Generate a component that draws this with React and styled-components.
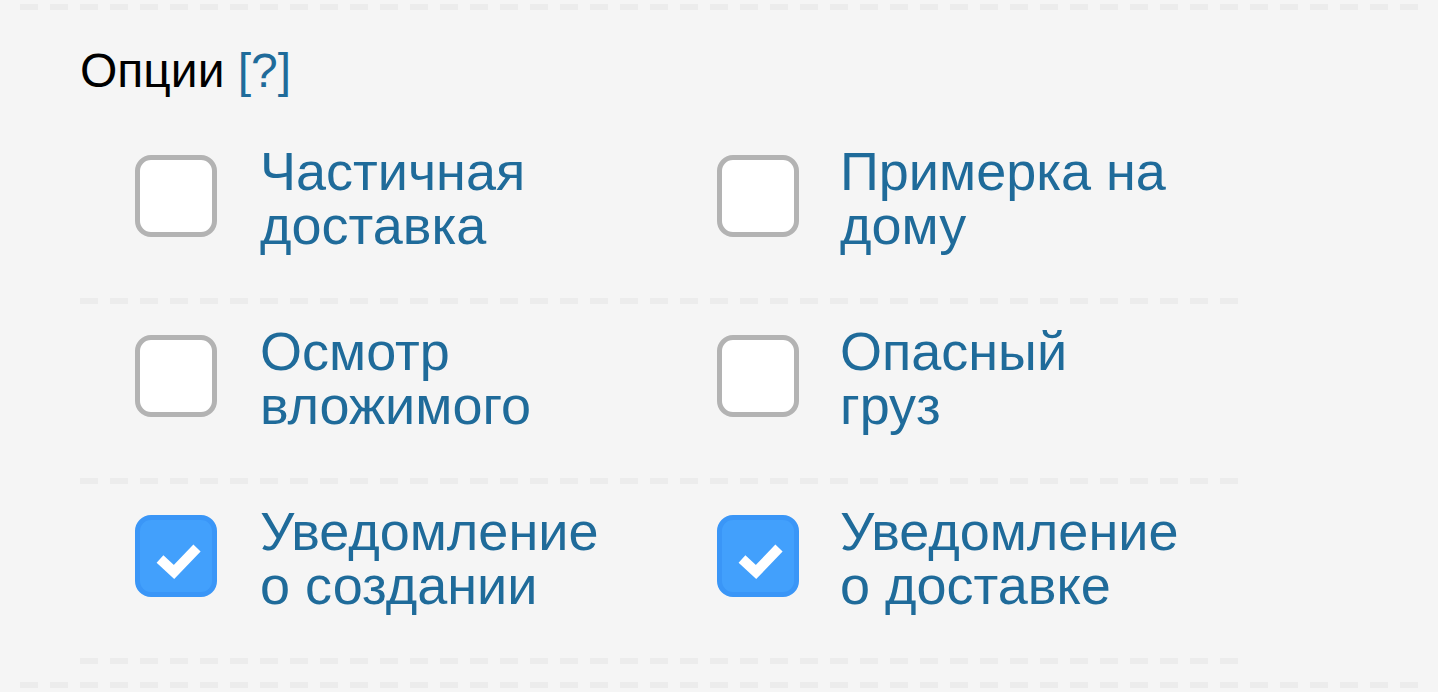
import React from 'react'
import styled, { createGlobalStyle } from 'styled-components'

const GlobalStyle = createGlobalStyle`
  html, body {
    margin: 0;
    padding: 0;
    background: #f5f5f5;
    font-family: "Liberation Sans", Arial, Helvetica, sans-serif;
  }
`;

const dashes = `repeating-linear-gradient(to right, #ececec 0 18px, transparent 18px 30px)`;

const Page = styled.div`
  padding: 4px 20px 0;
  width: 1398px;
`;

const Rule = styled.div`
  height: 6px;
  background: ${dashes};
`;

const Section = styled.div`
  padding: 0 60px;
`;

const Title = styled.h2`
  margin: 34px 0 26px;
  font-size: 48px;
  line-height: 54px;
  font-weight: 400;
  color: #000;
`;

const Help = styled.a`
  color: #1f6b9a;
  text-decoration: none;
`;

const Grid = styled.div`
  width: 1164px;
  margin-bottom: 18px;
`;

const Row = styled.div`
  display: flex;
  padding: 22px 0 44px;
  border-bottom: 6px solid transparent;
  border-image: ${dashes} 0 0 6 0 / 0 0 6px 0;
  width: 1158px;
`;

const Option = styled.label`
  flex: none;
  display: flex;
  align-items: flex-start;
  gap: 43px;
  width: 582px;
  padding-left: 55px;
  box-sizing: border-box;
  cursor: pointer;
  &:nth-child(2) {
    gap: 41px;
  }
`;

const Box = styled.span`
  flex: none;
  width: 82px;
  height: 82px;
  margin-top: 9px;
  box-sizing: border-box;
  border-radius: 16px;
  border: 5px solid ${p => (p.$checked ? '#3a96f7' : '#b3b3b3')};
  background: ${p => (p.$checked ? '#42a0fc' : '#ffffff')};
  display: flex;
  align-items: center;
  justify-content: center;
`;

const Label = styled.span`
  margin: -2px 0 2px;
  font-size: 54px;
  line-height: 54px;
  color: #1f6b9a;
  white-space: pre-line;
`;

const Check = () => (
  <svg width="72" height="72" viewBox="5 5 72 72">
    <polyline points="25,44 39,57 62,33" fill="none" stroke="#fff" strokeWidth="10" />
  </svg>
)

const rows = [
  [
    { text: 'Частичная\nдоставка' },
    { text: 'Примерка на\nдому' },
  ],
  [
    { text: 'Осмотр\nвложимого' },
    { text: 'Опасный\nгруз' },
  ],
  [
    { text: 'Уведомление\nо создании', checked: true },
    { text: 'Уведомление\nо доставке', checked: true },
  ],
]

export default function App() {
  return (
    <Page>
      <GlobalStyle />
      <Rule />
      <Section>
        <Title>
          Опции <Help href="#">[?]</Help>
        </Title>
        <Grid>
          {rows.map((row, i) => (
            <Row key={i}>
              {row.map(opt => (
                <Option key={opt.text}>
                  <Box $checked={opt.checked}>{opt.checked && <Check />}</Box>
                  <Label>{opt.text}</Label>
                </Option>
              ))}
            </Row>
          ))}
        </Grid>
      </Section>
      <Rule />
    </Page>
  )
}
